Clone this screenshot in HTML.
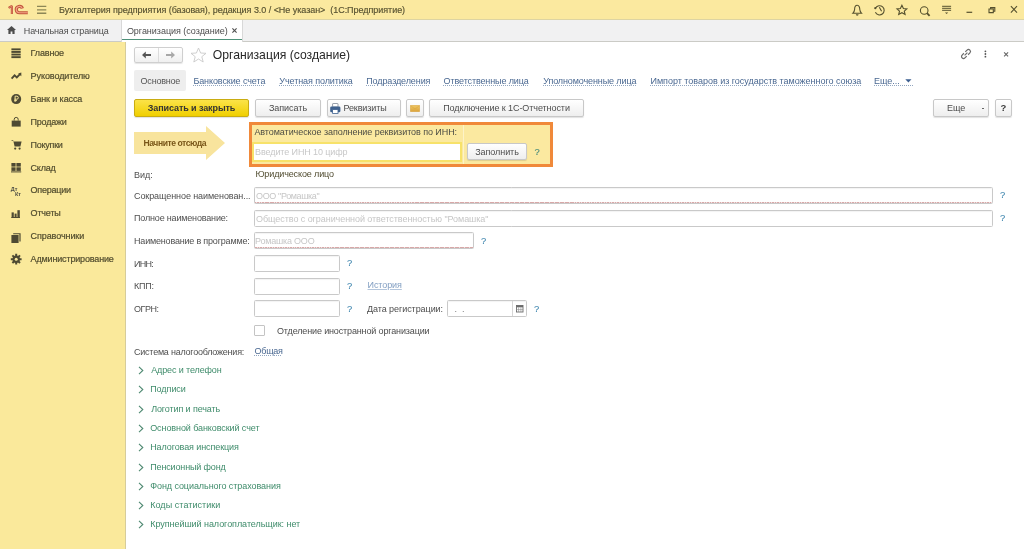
<!DOCTYPE html>
<html><head><meta charset="utf-8">
<style>
*{box-sizing:border-box;margin:0;padding:0}
html,body{width:1024px;height:549px;overflow:hidden;background:#fff}
body{position:relative;font-family:"Liberation Sans",sans-serif;font-size:9px;color:#4d4d4d}
#root{position:absolute;left:0;top:0;width:1024px;height:549px;will-change:transform}
.a{position:absolute;white-space:nowrap}
.t{position:absolute;white-space:nowrap;line-height:12px;height:12px}
#hdr{left:0;top:0;width:1024px;height:20px;background:#fbe99f;border-bottom:1px solid #ddd4a2}
#tabs{left:0;top:20px;width:1024px;height:22px;background:#f1f1f2;border-bottom:1px solid #cbcbc6}
#side{left:0;top:42px;width:126px;height:507px;background:#fae99b;border-right:1px solid #d6cc9a}
.side-item{position:absolute;left:30px;line-height:12px;color:#524d2e;-webkit-text-stroke:0.2px #524d2e}
.lnk{color:#4a6891;text-decoration:underline dotted;text-decoration-thickness:1px;text-underline-offset:1.2px;text-decoration-color:#92a6c0}
.btn{position:absolute;height:17.5px;border:1px solid #c8c8c8;border-radius:2px;background:linear-gradient(#ffffff,#eeeeee);box-shadow:0 1px 1px rgba(0,0,0,.12);text-align:center;line-height:16.5px;color:#4d4d4d}
.inp{position:absolute;height:16px;border:1px solid #c9c9c9;border-radius:1.5px;background:#fff;box-shadow:inset 0 1px 1px rgba(0,0,0,.05)}
.ph{position:absolute;left:1px;top:0;line-height:14px;color:#c6c6c6}
.req{position:absolute;left:0;right:0;bottom:0;height:1.2px;background:repeating-linear-gradient(90deg,#d8a8a8 0 1.5px,#f0dede 1.5px 2.5px)}
.q{position:absolute;color:#4a8db3;font-weight:normal;line-height:12px;font-size:9.4px;-webkit-text-stroke:0.15px #4a8db3;margin-top:-0.1px}
.grp{position:absolute;left:150.5px;color:#3f8c6b;line-height:12px}
.chev{position:absolute;left:138px;width:6px;height:9px}
.lbl{position:absolute;left:134px;line-height:12px;color:#4f4f4f;margin-top:0.5px}
</style></head><body><div id="root" style="">

<!-- header -->
<div class="a" id="hdr"></div>
<svg class="a" style="left:0px;top:0px" width="50" height="20" viewBox="0 0 50 20">
  <path d="M8.6 7.9 L11.9 5.9 V14.1" stroke="#c2563b" stroke-width="2.2" fill="none" stroke-linejoin="bevel"/>
  <path d="M9.2 7.6 L11.9 6 V13.8" stroke="#eea084" stroke-width="0.6" fill="none"/>
  <path d="M22.4 8.6 A3.15 3.15 0 1 0 19.4 12.75 H27.8" stroke="#c2563b" stroke-width="3.2" fill="none"/>
  <path d="M22.4 8.6 A3.15 3.15 0 1 0 19.4 12.75 H27.8" stroke="#f2a486" stroke-width="1.1" fill="none"/>
  <path d="M37 6.4H46.3M37 9.9H46.3M37 13.3H46.3" stroke="#8c8656" stroke-width="1.4"></path>
</svg>

<div class="t" style="left: 59px; top: 4.3px; color: rgb(86, 81, 48); font-size: 9px; letter-spacing: -0.042px; -webkit-text-stroke: 0.15px rgb(86, 81, 48);">Бухгалтерия предприятия (базовая), редакция 3.0 / &lt;Не указан&gt;&nbsp; (1С:Предприятие)</div>

<!-- header icons -->
<svg class="a" style="left:850px;top:3px" width="172" height="14" viewBox="0 0 172 14">
  <g stroke="#55502e" stroke-width="1.1" fill="none">
    <path d="M7.2 2.3 C5.2 2.3 4.6 4.6 4.6 6.6 C4.6 8 4.2 8.8 2.8 10.3 H11.6 C10.2 8.8 9.8 8 9.8 6.6 C9.8 4.6 9.2 2.3 7.2 2.3 Z"/>
    <path d="M25.6 5 A4.6 4.6 0 1 1 25.4 9.3"/><path d="M29.3 4.3 L31.6 8.3"/>
    <path d="M51.9 2.3 L53.4 5.6 L56.8 5.9 L54.3 8.1 L55.1 11.5 L51.9 9.7 L48.7 11.5 L49.5 8.1 L47 5.9 L50.4 5.6 Z"/>
    <circle cx="74.2" cy="7.5" r="3.8"/>
    <path d="M92.1 3.3H101.1M92.1 5.3H101.1M92.1 7.3H101.1" stroke-width="1.0"/>
    <path d="M116.5 9.3H122.2" stroke-width="1.2"/>
    <path d="M139 6H143.3V9.6H139Z M140.6 6V4.6H144.8V8.3H143.3"/>
    <path d="M160.9 3.2 L167 9.6 M167 3.2 L160.9 9.6"/>
  </g>
  <circle cx="25.3" cy="5.2" r="1.1" fill="#55502e"/>
  <path d="M77 10.2 L79.6 12.8" stroke="#55502e" stroke-width="1.8"/>
  <path d="M5.8 11.3 H8.6 A1.4 1.4 0 0 1 5.8 11.3Z" fill="#55502e"/>
  <path d="M95 9.4 H98.2 L96.6 11 Z" fill="#55502e"/>
</svg>

<!-- tab bar -->
<div class="a" id="tabs"></div>
<svg class="a" style="left:7px;top:26px" width="9" height="8" viewBox="0 0 9 8">
  <path d="M4.5 0 L9 4 H7.6 V8 H5.4 V5.5 H3.6 V8 H1.4 V4 H0 Z" fill="#4d4d4d"></path>
</svg>
<div class="t" style="left: 23.75px; top: 24.5px; color: rgb(77, 77, 77); letter-spacing: -0.118px;">Начальная страница</div>
<div class="a" style="left:121px;top:20px;width:122px;height:22px;background:#fff;border-left:1px solid #d8d8d8;border-right:1px solid #d8d8d8"></div>
<div class="a" style="left:122px;top:38.7px;width:120px;height:1.2px;background:#4f9179"></div>
<div class="t" style="left: 126.9px; top: 24.5px; color: rgb(77, 77, 77); letter-spacing: -0.029px;">Организация (создание)</div>
<svg class="a" style="left:232.2px;top:28.2px" width="5" height="5" viewBox="0 0 5 5"><path d="M0.4 0.4L4.6 4.6M4.6 0.4L0.4 4.6" stroke="#505050" stroke-width="1.1"/></svg>

<!-- sidebar -->
<div class="a" id="side"></div>

<div class="side-item" style="top: 46.85px; letter-spacing: -0.142px; left: 30.6px;">Главное</div>
<div class="side-item" style="top: 69.79px; letter-spacing: -0.073px; left: 30.6px;">Руководителю</div>
<div class="side-item" style="top: 92.73px; letter-spacing: -0.118px; left: 30.6px;">Банк и касса</div>
<div class="side-item" style="top: 115.67px; letter-spacing: -0.25px; left: 30.6px;">Продажи</div>
<div class="side-item" style="top: 138.61px; letter-spacing: -0.267px; left: 30.6px;">Покупки</div>
<div class="side-item" style="top: 161.55px; letter-spacing: -0.25px; left: 30.6px;">Склад</div>
<div class="side-item" style="top: 184.49px; letter-spacing: -0.243px; left: 30.6px;">Операции</div>
<div class="side-item" style="top: 207.43px; letter-spacing: -0.18px; left: 30.6px;">Отчеты</div>
<div class="side-item" style="top: 230.37px; letter-spacing: -0.09px; left: 30.6px;">Справочники</div>
<div class="side-item" style="top: 253.31px; letter-spacing: -0.162px; left: 30.6px;">Администрирование</div>
<svg class="a" style="left:10px;top:47px" width="13" height="220" viewBox="0 0 13 220">
 <g fill="#4e4a33">
  <rect x="1.4" y="1.4" width="9.3" height="1.9"></rect><rect x="1.4" y="4.0" width="9.3" height="1.9"></rect><rect x="1.4" y="6.6" width="9.3" height="1.9"></rect><rect x="1.4" y="9.2" width="9.3" height="1.9"></rect>
  <path d="M11.3 25.6 L11.3 29.2 L8.2 26.5 Z"></path>
  <circle cx="6.2" cy="52.1" r="5"></circle>
  <path d="M1.7 73.6 H10.7 V79.6 H1.7 Z"></path>
  <path d="M0.8 93.2 H3.2 L4.6 99.6 H10.4 L11.6 94.6 H3.8 Z"></path><circle cx="5.2" cy="101.6" r="1.1"></circle><circle cx="9.6" cy="101.6" r="1.1"></circle>
  <rect x="1.4" y="116" width="4.2" height="3.6"></rect><rect x="6.4" y="116" width="4.4" height="3.6"></rect><rect x="1.4" y="120.3" width="4.2" height="3.6"></rect><rect x="6.4" y="120.3" width="4.4" height="3.6"></rect><rect x="1" y="124.4" width="10.2" height="1"></rect>
  <rect x="1.6" y="165.4" width="2.2" height="5.6"/><rect x="4.6" y="166.6" width="2" height="4.4"/><rect x="7.4" y="163.2" width="2.4" height="7.8"/><rect x="1.4" y="170" width="8.6" height="1"/>
  <path d="M1.4 188 H8.6 V196 H1.4 Z"></path><path d="M3.2 186.2 H10.6 V194.4 H9.4 V187.2 H3.2 Z"></path>
  <circle cx="6.2" cy="212.2" r="3.7"></circle>
 </g>
 <path d="M1.6 31.6 L4.6 28.4 L6.8 30.4 L10 27.2" stroke="#4e4a33" stroke-width="1.9" fill="none"></path>
 <path d="M5.1 54.9 V49.2 H6.8 A1.5 1.5 0 0 1 6.8 52.2 H4.5 M4.3 53.6 H6.9" stroke="#fae99b" stroke-width="1" fill="none"></path>
 <path d="M4.2 73.6 V72.4 A2 2 0 0 1 8.2 72.4 V73.6" stroke="#4e4a33" stroke-width="1" fill="none"></path>
 <g stroke="#4e4a33" stroke-width="2"><path d="M6.2 206.8 V217.6 M0.8 212.2 H11.6 M2.4 208.4 L10 216 M10 208.4 L2.4 216"></path></g>
 <circle cx="6.2" cy="212.2" r="1.5" fill="#fae99b"></circle>
 <g fill="#4f4f46" font-size="5.5" font-family="Liberation Sans" font-weight="bold"><text x="0.8" y="143.5">Дт</text><text x="5" y="148.6">Кт</text></g>
</svg>



<!-- content header -->
<div class="a" style="left:134px;top:47px;width:49px;height:16px;border:1px solid #cfcfcf;border-radius:2px;background:linear-gradient(#fff,#f0f0f0);box-shadow:0 1px 1px rgba(0,0,0,.1)"></div>
<div class="a" style="left:158px;top:48px;width:1px;height:14px;background:#dcdcdc"></div>
<svg class="a" style="left:140.8px;top:50px" width="40" height="10" viewBox="0 0 40 10">
  <path d="M1 5 L4.8 1.6 V4 H10 V6 H4.8 V8.4 Z" fill="#555"/>
  <path d="M34 5 L30.2 1.6 V4 H25 V6 H30.2 V8.4 Z" fill="#a8a8a8"/>
</svg>
<svg class="a" style="left:190px;top:47px" width="17" height="16" viewBox="0 0 17 16">
  <path d="M8.5 1 L10.6 6 L16 6.3 L11.8 9.7 L13.2 15 L8.5 12 L3.8 15 L5.2 9.7 L1 6.3 L6.4 6 Z" fill="none" stroke="#c9c9c9" stroke-width="0.9"></path>
</svg>
<div class="a" style="left: 212.8px; top: 47.8px; font-size: 12.2px; line-height: 15px; color: rgb(40, 40, 40); letter-spacing: -0.002px;">Организация (создание)</div>
<svg class="a" style="left:958px;top:46px" width="54" height="16" viewBox="0 0 54 16">
  <g transform="rotate(-45 8 8)" stroke="#6a6a6a" stroke-width="1.2" fill="none">
    <path d="M7 6 H4.5 A2 2 0 0 0 4.5 10 H7"></path><path d="M9 6 H11.5 A2 2 0 0 1 11.5 10 H9"></path><path d="M6 8 H10"></path>
  </g>
  <g fill="#555"><circle cx="27.4" cy="5.3" r="0.9"></circle><circle cx="27.4" cy="8" r="0.9"></circle><circle cx="27.4" cy="10.7" r="0.9"></circle></g>
  <path d="M46.1 6.4 L50.1 10.4 M50.1 6.4 L46.1 10.4" stroke="#666" stroke-width="1.1"></path>
</svg>

<!-- page tabs -->
<div class="a" style="left:134px;top:70px;width:52px;height:21px;background:#eeeeee;border-radius:2px"></div>
<div class="t" style="left: 140.6px; top: 75px; color: rgb(85, 85, 85); letter-spacing: -0.229px;">Основное</div>
<div class="t lnk" style="left: 193.4px; top: 75px; letter-spacing: -0.093px;">Банковские счета</div>
<div class="t lnk" style="left: 279.3px; top: 75px; letter-spacing: -0.087px;">Учетная политика</div>
<div class="t lnk" style="left: 366.2px; top: 75px; letter-spacing: -0.1px;">Подразделения</div>
<div class="t lnk" style="left: 443.6px; top: 75px; letter-spacing: -0.118px;">Ответственные лица</div>
<div class="t lnk" style="left: 543.2px; top: 75px; letter-spacing: -0.111px;">Уполномоченные лица</div>
<div class="t lnk" style="left: 650.5px; top: 75px; letter-spacing: -0.02px;">Импорт товаров из государств таможенного союза</div>
<div class="t lnk" style="left:874px;top:75px">Еще...&nbsp;&nbsp;&nbsp;&nbsp;&nbsp;&nbsp;</div>
<svg class="a" style="left:905px;top:79.3px" width="7" height="4" viewBox="0 0 7 4"><path d="M0.3 0.3H6.5L3.4 3.6Z" fill="#3d5f90"/></svg>

<!-- command bar -->
<div class="btn" style="left: 134px; top: 99px; width: 115px; background: linear-gradient(rgb(251, 227, 73), rgb(240, 207, 0)); border-color: rgb(201, 172, 18); color: rgb(51, 51, 51); font-weight: bold; letter-spacing: -0.088px;">Записать и закрыть</div>
<div class="btn" style="left: 255px; top: 99px; width: 66px; letter-spacing: -0.043px;">Записать</div>
<div class="btn" style="left: 327px; top: 99px; width: 74px; text-align: left; padding-left: 15.4px; letter-spacing: -0.087px;">Реквизиты</div>
<svg class="a" style="left:330px;top:102.5px" width="11" height="11" viewBox="0 0 11 11">
  <rect x="2.6" y="0.5" width="5.4" height="3.6" rx="0.5" fill="#fff" stroke="#7d8896" stroke-width="0.8"/>
  <rect x="0.2" y="3.4" width="10.2" height="5.8" rx="1.3" fill="#3f628f"/>
  <rect x="2.6" y="6.6" width="5.4" height="3.8" fill="#fff" stroke="#3f628f" stroke-width="0.8"/>
</svg>
<div class="btn" style="left:406px;top:99px;width:18px"></div>
<svg class="a" style="left:410px;top:104.9px" width="10" height="7" viewBox="0 0 10 7">
  <defs><linearGradient id="env" x1="0" y1="0" x2="0" y2="1"><stop offset="0" stop-color="#efc865"/><stop offset="1" stop-color="#dba23a"/></linearGradient></defs>
  <rect x="0.3" y="0.3" width="9.4" height="6.4" rx="0.6" fill="url(#env)" stroke="#d6a545" stroke-width="0.6"/>
  <path d="M0.6 0.8 L5 4 L9.4 0.8" stroke="#c99535" stroke-width="0.5" fill="none" opacity="0.6"/>
</svg>
<div class="btn" style="left: 429px; top: 99px; width: 155px; letter-spacing: -0.077px;">Подключение к 1С-Отчетности</div>
<div class="btn" style="left:933px;top:99px;width:56px;text-align:left;padding-left:13px">Еще</div>
<div class="a" style="left:981.8px;top:108px;width:2.2px;height:1.3px;background:#666"></div>
<div class="btn" style="left:995px;top:99px;width:17px;font-weight:bold;color:#3a3a3a;font-size:9.5px">?</div>

<!-- start arrow -->
<svg class="a" style="left:133px;top:125px" width="94" height="36" viewBox="0 0 94 36">
  <path d="M1 7 H73 V1 L92 18 L73 35 V29 H1 Z" fill="#f8e49d"></path>
</svg>
<div class="a" style="left:143.5px;top:137.6px;font-size:8.6px;font-weight:bold;color:#7a5719;line-height:11px;letter-spacing:-0.45px">Начните отсюда</div>

<!-- orange box -->
<div class="a" style="left:249px;top:122px;width:304px;height:45px;border:3px solid #f0893a;background:#fbe9a0"></div>
<div class="a" style="left:463px;top:125px;width:1px;height:39px;background:#fdf3c8"></div>
<div class="t" style="left: 254.4px; top: 126px; color: rgb(77, 77, 68); letter-spacing: -0.067px;">Автоматическое заполнение реквизитов по ИНН:</div>
<div class="a" style="left:252px;top:142px;width:210px;height:20px;border:2px solid #f7e26a;background:#fff"></div>
<div class="a" style="left: 255.1px; top: 146px; line-height: 12px; color: rgb(200, 200, 200); letter-spacing: -0.106px;">Введите ИНН 10 цифр</div>
<div class="btn" style="left: 467px; top: 143px; width: 60px; height: 17px; letter-spacing: -0.063px;">Заполнить</div>
<div class="q" style="left:534.5px;top:146px;color:#4a8c7c;-webkit-text-stroke-color:#4a8c7c">?</div>

<!-- form -->
<div class="lbl" style="top:168px">Вид:</div>
<div class="t" style="left: 255.4px; top: 168px; color: rgb(81, 76, 48); letter-spacing: -0.127px;">Юридическое лицо</div>

<div class="lbl" style="top: 189px; letter-spacing: -0.083px; left: 134px;">Сокращенное наименован...</div>
<div class="inp" style="left:254px;top:187px;width:739px;height:17px"><i class="req"></i><span class="ph" style="top: 1px; letter-spacing: -0.375px; left: 1.1px;">ООО "Ромашка"</span></div>
<div class="q" style="left:1000px;top:189px">?</div>

<div class="lbl" style="top: 211px; letter-spacing: -0.174px; left: 134px;">Полное наименование:</div>
<div class="inp" style="left:254px;top:210px;width:739px;height:17px"><span class="ph" style="top: 1px; letter-spacing: -0.063px; left: 1.1px;">Общество с ограниченной ответственностью "Ромашка"</span></div>
<div class="q" style="left:1000px;top:212px">?</div>

<div class="lbl" style="top: 234px; letter-spacing: -0.188px; left: 134px;">Наименование в программе:</div>
<div class="inp" style="left:254px;top:232px;width:220px;height:17px"><i class="req"></i><span class="ph" style="top: 1px; letter-spacing: -0.21px; left: 0.1px;">Ромашка ООО</span></div>
<div class="q" style="left:481px;top:235px">?</div>

<div class="lbl" style="top: 257px; letter-spacing: -0.7px; left: 134px;">ИНН:</div>
<div class="inp" style="left:254px;top:255px;width:86px;height:17px"></div>
<div class="q" style="left:347px;top:257px">?</div>

<div class="lbl" style="top: 279px; letter-spacing: -0.233px; left: 134px;">КПП:</div>
<div class="inp" style="left:254px;top:278px;width:86px;height:17px"></div>
<div class="q" style="left:347px;top:280px">?</div>
<div class="t lnk" style="left: 367.5px; top: 279px; color: rgb(132, 160, 195); text-decoration-style: solid; text-decoration-color: rgb(180, 198, 220); letter-spacing: -0.083px;">История</div>

<div class="lbl" style="top: 302px; letter-spacing: -0.45px; left: 134px;">ОГРН:</div>
<div class="inp" style="left:254px;top:300px;width:86px;height:17px"></div>
<div class="q" style="left:347px;top:303px">?</div>
<div class="t" style="left: 367px; top: 303px; letter-spacing: -0.063px;">Дата регистрации:</div>
<div class="inp" style="left:447px;top:300px;width:80px;height:17px"></div>
<div class="a" style="left:512px;top:301px;width:1px;height:15px;background:#d6d6d6"></div>
<div class="t" style="left:452px;top:303px;color:#777">&nbsp;.&nbsp;&nbsp;.</div>
<svg class="a" style="left:516px;top:305px" width="7.5" height="7.5" viewBox="0 0 7.5 7.5"><rect x="0.5" y="0.5" width="6.5" height="6.5" fill="#fff" stroke="#6a6a6a" stroke-width="0.9"/><rect x="0.5" y="0.5" width="6.5" height="1.8" fill="#6a6a6a"/><path d="M2.6 2.3V7M4.9 2.3V7M0.5 4.6H7" stroke="#8a8a8a" stroke-width="0.6"/></svg>
<div class="q" style="left:534px;top:303px">?</div>

<div class="a" style="left:254px;top:325px;width:11px;height:11px;border:1px solid #c4c4c4;border-radius:1px;background:#fff"></div>
<div class="t" style="left: 277px; top: 325px; letter-spacing: -0.141px;">Отделение иностранной организации</div>

<div class="lbl" style="top: 345px; letter-spacing: -0.23px; left: 134px;">Система налогообложения:</div>
<div class="t lnk" style="left: 254.5px; top: 345px; letter-spacing: -0.25px;">Общая</div>

<!-- groups -->
<svg class="chev" style="top:366.2px" viewBox="0 0 6 9"><path d="M1 0.8 L4.8 4.5 L1 8.2" stroke="#4f8a72" stroke-width="1.1" fill="none"></path></svg><div class="grp" style="top: 364.2px; letter-spacing: -0.118px; left: 151.2px;">Адрес и телефон</div>
<svg class="chev" style="top:385.3px" viewBox="0 0 6 9"><path d="M1 0.8 L4.8 4.5 L1 8.2" stroke="#4f8a72" stroke-width="1.1" fill="none"></path></svg><div class="grp" style="top: 383.3px; letter-spacing: -0.05px; left: 150.2px;">Подписи</div>
<svg class="chev" style="top:404.7px" viewBox="0 0 6 9"><path d="M1 0.8 L4.8 4.5 L1 8.2" stroke="#4f8a72" stroke-width="1.1" fill="none"></path></svg><div class="grp" style="top: 402.7px; letter-spacing: -0.113px; left: 151.2px;">Логотип и печать</div>
<svg class="chev" style="top:423.8px" viewBox="0 0 6 9"><path d="M1 0.8 L4.8 4.5 L1 8.2" stroke="#4f8a72" stroke-width="1.1" fill="none"></path></svg><div class="grp" style="top: 421.8px; letter-spacing: -0.087px; left: 150.2px;">Основной банковский счет</div>
<svg class="chev" style="top:443.2px" viewBox="0 0 6 9"><path d="M1 0.8 L4.8 4.5 L1 8.2" stroke="#4f8a72" stroke-width="1.1" fill="none"></path></svg><div class="grp" style="top: 441.2px; letter-spacing: -0.094px; left: 150.2px;">Налоговая инспекция</div>
<svg class="chev" style="top:462.5px" viewBox="0 0 6 9"><path d="M1 0.8 L4.8 4.5 L1 8.2" stroke="#4f8a72" stroke-width="1.1" fill="none"></path></svg><div class="grp" style="top: 460.5px; letter-spacing: -0.136px; left: 150.2px;">Пенсионный фонд</div>
<svg class="chev" style="top:481.7px" viewBox="0 0 6 9"><path d="M1 0.8 L4.8 4.5 L1 8.2" stroke="#4f8a72" stroke-width="1.1" fill="none"></path></svg><div class="grp" style="top: 479.7px; letter-spacing: -0.07px; left: 150.2px;">Фонд социального страхования</div>
<svg class="chev" style="top:501.0px" viewBox="0 0 6 9"><path d="M1 0.8 L4.8 4.5 L1 8.2" stroke="#4f8a72" stroke-width="1.1" fill="none"></path></svg><div class="grp" style="top: 499px; letter-spacing: 0.057px; left: 150.2px;">Коды статистики</div>
<svg class="chev" style="top:520.1px" viewBox="0 0 6 9"><path d="M1 0.8 L4.8 4.5 L1 8.2" stroke="#4f8a72" stroke-width="1.1" fill="none"></path></svg><div class="grp" style="top: 518.1px; letter-spacing: -0.048px; left: 150.2px;">Крупнейший налогоплательщик: нет</div>
</div>
</body></html>
